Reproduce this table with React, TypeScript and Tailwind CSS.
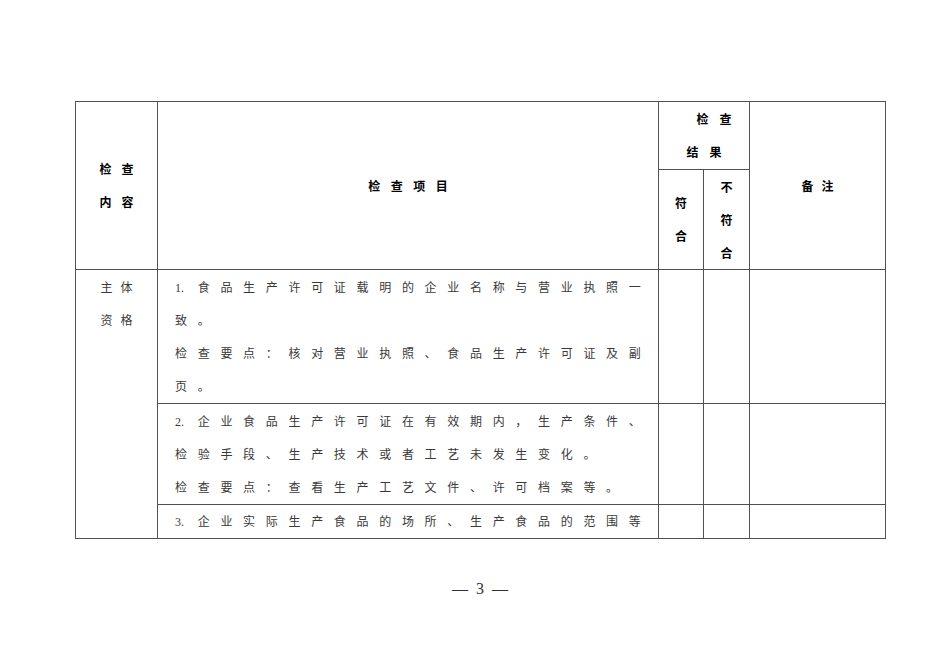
import React from "react"

const SERIF = { fontFamily: '"Liberation Serif", "Noto Sans CJK SC", serif' }
const SANS = { fontFamily: '"Noto Sans CJK SC", sans-serif' }

const tokens = (s: string) => s.match(/\d+\.|./gu) ?? []

// 一行正文：每个字占一个固定宽度的格
function Line({ text }: { text: string }) {
  return (
    <div className="flex h-[33px] items-center">
      {tokens(text).map((t, i) => (
        <span key={i} className="inline-block w-[22.7px] shrink-0 text-left">
          {t}
        </span>
      ))}
    </div>
  )
}

// 表头里带间距的字
function Spaced({ text, gap, className = "" }: { text: string; gap: string; className?: string }) {
  return (
    <div className={`flex h-[33px] items-center justify-center ${gap} ${className}`}>
      {Array.from(text).map((c, i) => (
        <span key={i}>{c}</span>
      ))}
    </div>
  )
}

const rows = [
  {
    h: "h-[134px]",
    pad: "pt-[1px]",
    lines: ["1.食品生产许可证载明的企业名称与营业执照一", "致。", "检查要点：核对营业执照、食品生产许可证及副", "页。"],
  },
  {
    h: "h-[101px]",
    pad: "pt-[1px]",
    lines: ["2.企业食品生产许可证在有效期内，生产条件、", "检验手段、生产技术或者工艺未发生变化。", "检查要点：查看生产工艺文件、许可档案等。"],
  },
  {
    h: "h-[34px]",
    pad: "pt-0",
    lines: ["3.企业实际生产食品的场所、生产食品的范围等"],
  },
]

export default function App() {
  const cell = "border border-[#505050] p-0"
  const head = `${cell} align-middle font-bold text-black`

  return (
    <div className="min-h-[672px] w-[950px] bg-white pl-[75px] pt-[101px]" style={SERIF}>
      <table className="w-[810px] table-fixed border-collapse text-[12px] text-[#3a3a3a]">
        <colgroup>
          <col className="w-[82px]" />
          <col className="w-[501px]" />
          <col className="w-[45px]" />
          <col className="w-[46px]" />
          <col className="w-[136px]" />
        </colgroup>
        <tbody>
          {/* 表头 */}
          <tr className="h-[68px]">
            <td rowSpan={2} className={head} style={SANS}>
              <Spaced text="检查" gap="gap-[10px]" />
              <Spaced text="内容" gap="gap-[10px]" />
            </td>
            <td rowSpan={2} className={head} style={SANS}>
              <Spaced text="检查项目" gap="gap-[10.5px]" />
            </td>
            <td colSpan={2} className={head} style={SANS}>
              <Spaced text="检查" gap="gap-[11px]" className="pl-[20px]" />
              <Spaced text="结果" gap="gap-[11px]" />
            </td>
            <td rowSpan={2} className={head} style={SANS}>
              <Spaced text="备注" gap="gap-[8px]" />
            </td>
          </tr>
          <tr className="h-[100px]">
            <td className={head} style={SANS}>
              <Spaced text="符" gap="" />
              <Spaced text="合" gap="" />
            </td>
            <td className={head} style={SANS}>
              <Spaced text="不" gap="" />
              <Spaced text="符" gap="" />
              <Spaced text="合" gap="" />
            </td>
          </tr>

          {/* 正文 */}
          {rows.map((r, i) => (
            <tr key={i} className={r.h}>
              {i === 0 && (
                <td rowSpan={3} className={`${cell} pt-[1px] align-top`}>
                  <Spaced text="主体" gap="gap-[8px]" />
                  <Spaced text="资格" gap="gap-[8px]" />
                </td>
              )}
              <td className={`${cell} pl-[17px] ${r.pad} align-top`}>
                {r.lines.map((l, j) => (
                  <Line key={j} text={l} />
                ))}
              </td>
              <td className={cell} />
              <td className={cell} />
              <td className={cell} />
            </tr>
          ))}
        </tbody>
      </table>

      <div className="mt-[40px] flex h-[20px] w-[810px] items-center justify-center gap-[8px] text-[16px] text-[#333]">
        <span>—</span>
        <span>3</span>
        <span>—</span>
      </div>
    </div>
  )
}
